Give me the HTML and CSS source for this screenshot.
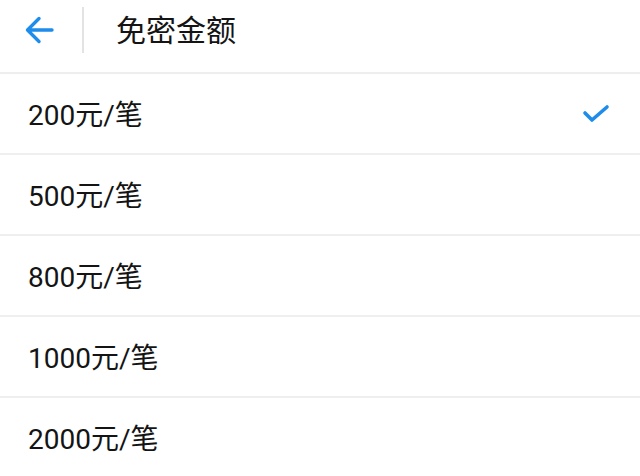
FILE: index.html
```html
<!DOCTYPE html>
<html lang="zh-CN">
<head>
<meta charset="utf-8">
<link rel="stylesheet" href="styles.css">
</head>
<body>
<div class="page">
  <header class="bar">
    <div class="back">
      <svg width="32" height="32" viewBox="0 0 32 32"><path d="M29 16H4.5M16 4.5L4.5 16L16 27.5" fill="none" stroke="#1E8CEB" stroke-width="3.4" stroke-linecap="round" stroke-linejoin="round"/></svg>
    </div>
    <div class="divider"></div>
    <div class="title">免密金额</div>
  </header>
  <ul class="list">
    <li class="row"><span class="label">200元/笔</span>
      <svg class="check" width="28" height="22" viewBox="0 0 28 22"><path d="M3 10L10 17L25 4" fill="none" stroke="#1E8CEB" stroke-width="3.6" stroke-linecap="round" stroke-linejoin="round"/></svg>
    </li>
    <li class="row"><span class="label">500元/笔</span></li>
    <li class="row"><span class="label">800元/笔</span></li>
    <li class="row"><span class="label">1000元/笔</span></li>
    <li class="row"><span class="label">2000元/笔</span></li>
  </ul>
</div>
</body>
</html>
```
FILE: styles.css
```css
html, body {
  margin: 0;
  padding: 0;
  background: #ffffff;
}
.page {
  width: 640px;
  height: 476px;
  overflow: hidden;
  font-family: Roboto, "Noto Sans CJK SC", sans-serif;
  color: #141414;
}
.bar {
  display: flex;
  align-items: center;
  height: 60px;
  padding-bottom: 12px;
  border-bottom: 2px solid #eeeeee;
}
.back {
  width: 32px;
  height: 32px;
  margin-left: 23px;
  display: flex;
}
.divider {
  width: 2px;
  height: 46px;
  background: #e3e3e3;
  margin-left: 27px;
}
.title {
  margin-left: 32px;
  font-size: 30px;
  line-height: 1;
  padding-top: 2px;
}
.list {
  list-style: none;
  margin: 0;
  padding: 0;
}
.row {
  display: flex;
  align-items: center;
  justify-content: space-between;
  height: 79px;
  padding: 0 30px 0 28px;
  border-bottom: 2px solid #efefef;
}
.label {
  font-size: 28px;
  line-height: 1;
  padding-top: 5px;
}
.check {
  display: block;
}
```
